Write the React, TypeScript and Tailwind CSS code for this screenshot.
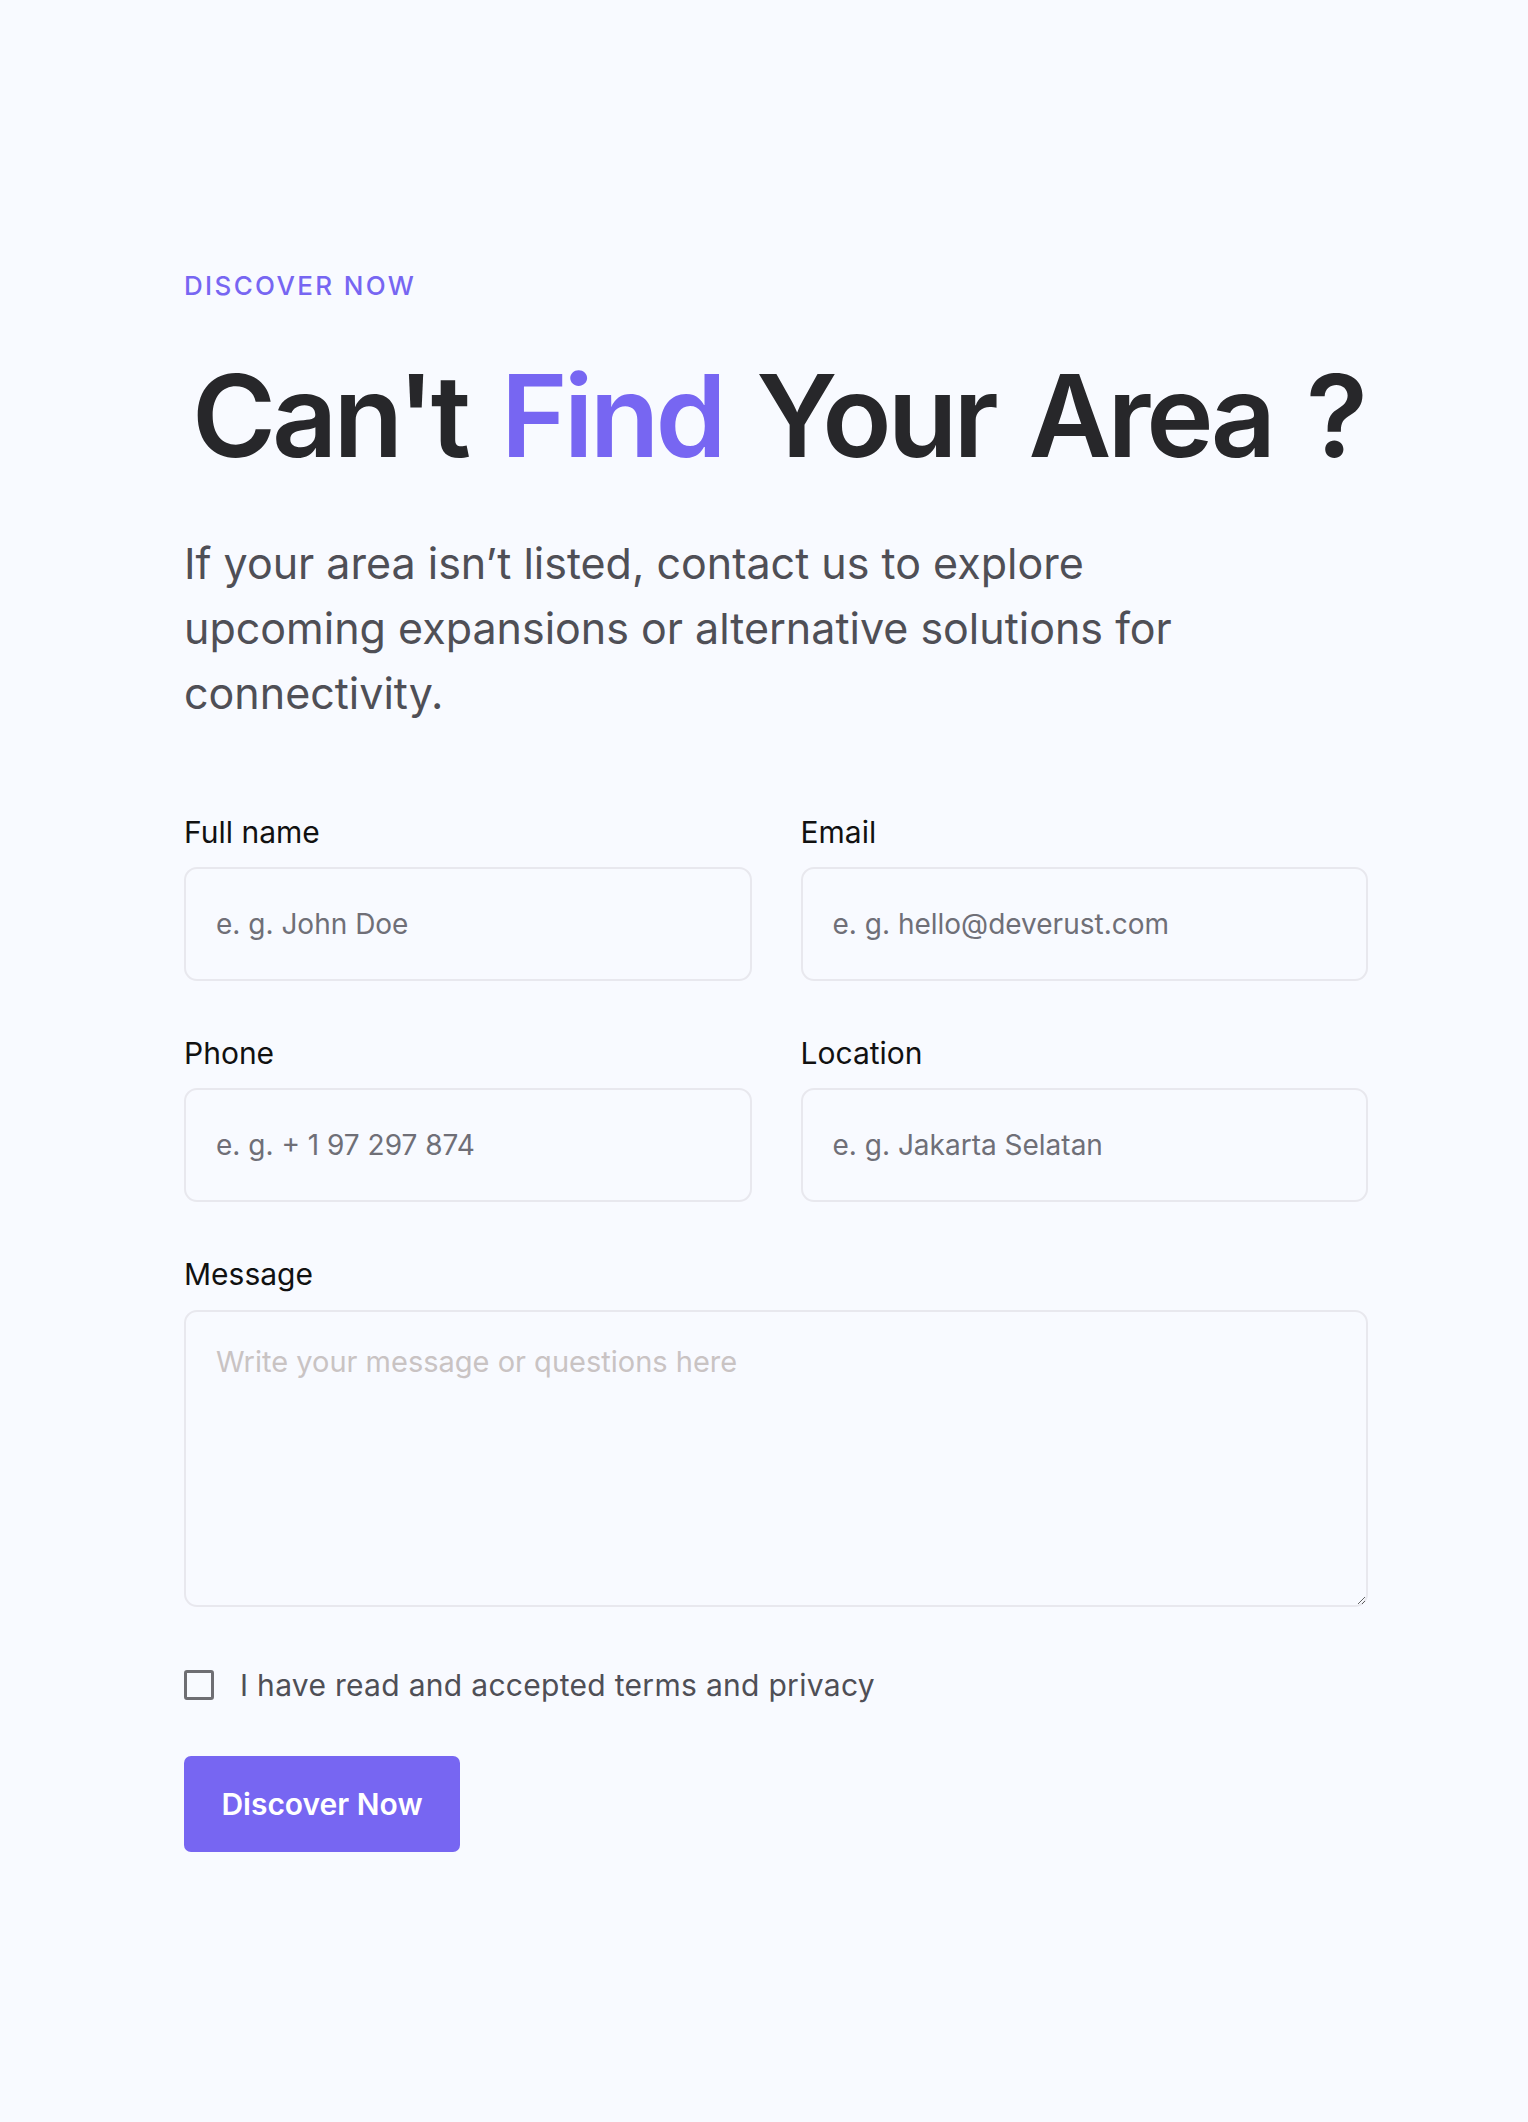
import React from "react";

export default function App() {
  return (
    <div
      className="min-h-screen w-full bg-[#f8faff] pl-[184px] pt-[273px] pb-[270px]"
      style={{ fontFamily: "Inter, 'Noto Sans', sans-serif" }}
    >
      <div className="w-[1184px]">
        <p className="text-[26px] leading-none font-medium tracking-[0.09em] text-[#7766f2]">
          DISCOVER NOW
        </p>
        <h1 className="mt-[60px] ml-[8px] whitespace-nowrap text-[114px] leading-none font-semibold tracking-[-0.035em] [word-spacing:9px] text-[#27272a]">
          Can't <span className="text-[#7766f2]">Find</span> Your Area ?
        </h1>
        <p className="mt-[58px] max-w-[1030px] text-[43px] leading-[65px] text-[#4f4f56]">
          If your area isn’t listed, contact us to explore upcoming expansions or alternative
          solutions for connectivity.
        </p>

        <form className="mt-[91px]" onSubmit={(e) => e.preventDefault()}>
          <div className="grid grid-cols-2 gap-x-[49px] gap-y-[57px]">
            <Field label="Full name" placeholder="e. g. John Doe" />
            <Field label="Email" placeholder="e. g. hello@deverust.com" />
            <Field label="Phone" placeholder="e. g. + 1 97 297 874" />
            <Field label="Location" placeholder="e. g. Jakarta Selatan" />
          </div>

          <div className="mt-[57px] flex flex-col">
            <label className="text-[30px] leading-none text-[#111111]">Message</label>
            <textarea
              placeholder="Write your message or questions here"
              className="mt-[21px] h-[297px] w-full rounded-[13px] border-2 border-[#e8e8ee] bg-transparent p-[30px] text-[29px] leading-[40px] text-[#27272a] placeholder:text-[#c9c3c3] outline-none"
            />
          </div>

          <label className="mt-[63px] flex items-center gap-[26px] cursor-pointer">
            <span className="block h-[30px] w-[30px] shrink-0 rounded-[3px] border-[3px] border-[#6e6e73]" />
            <span className="text-[30px] leading-[30px] tracking-[0.01em] text-[#4f4f56]">
              I have read and accepted terms and privacy
            </span>
          </label>

          <button
            type="submit"
            className="mt-[56px] flex h-[96px] w-[276px] items-center justify-center rounded-[7px] bg-[#7766f2] text-[30px] font-semibold text-white"
          >
            Discover Now
          </button>
        </form>
      </div>
    </div>
  );
}

function Field({ label, placeholder }: { label: string; placeholder: string }) {
  return (
    <div className="flex flex-col">
      <label className="text-[30px] leading-none text-[#111111]">{label}</label>
      <input
        type="text"
        placeholder={placeholder}
        className="mt-[20px] h-[114px] w-full rounded-[13px] border-2 border-[#e8e8ee] bg-transparent px-[30px] text-[28px] text-[#27272a] placeholder:text-[#6f6f77] outline-none"
      />
    </div>
  );
}
